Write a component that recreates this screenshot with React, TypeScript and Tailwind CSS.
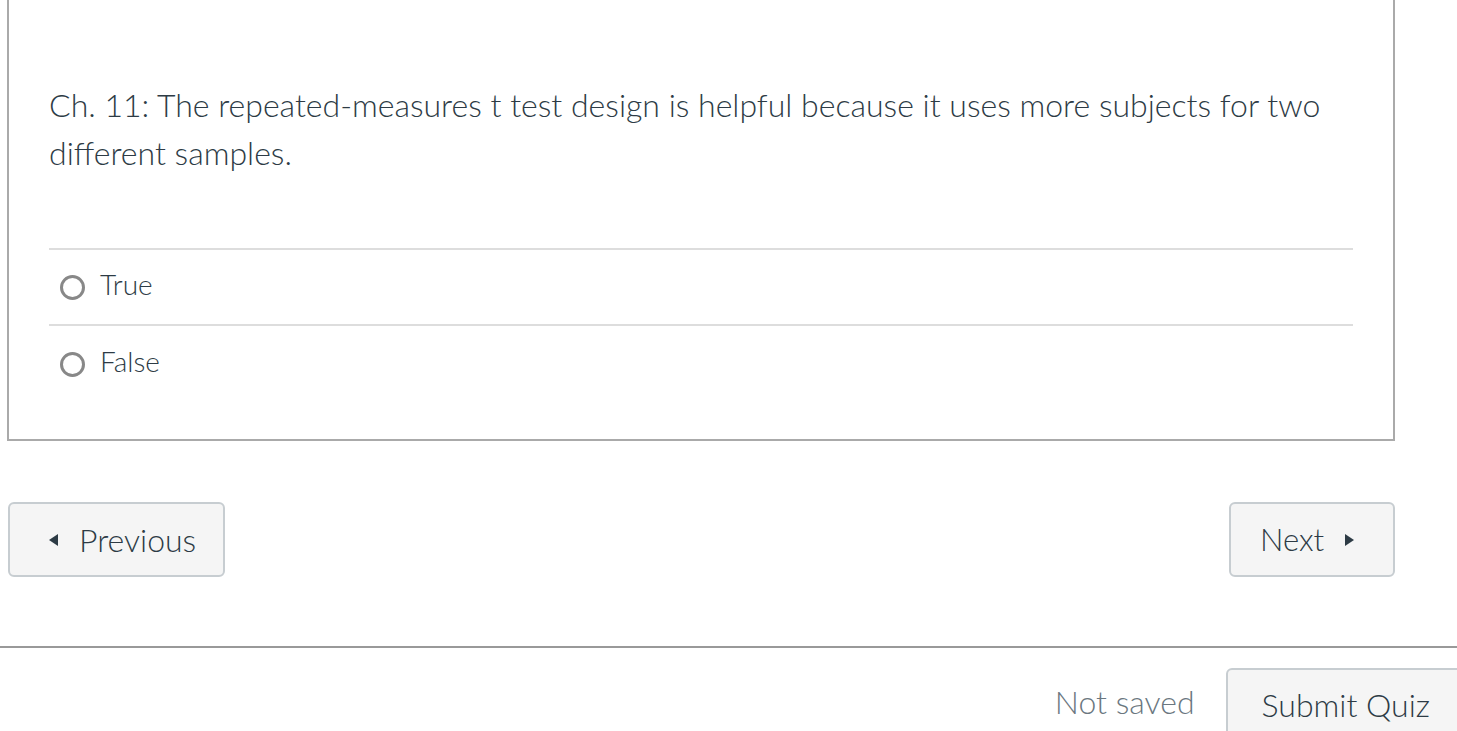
export default function App() {
  const answers = ["True", "False"];

  return (
    <div
      className="w-full h-[731px] overflow-hidden bg-white text-[#2d3b45]"
      style={{ fontFamily: "Lato, 'Noto Sans', sans-serif" }}
    >
      {/* question card (scrolled, top edge is above the viewport) */}
      <div className="ml-[7px] w-[1388px] border-x-2 border-b-2 border-[#aaaaaa] px-[40px] pt-[81px] pb-[37px]">
        <p className="text-[32px] leading-[48px] font-light">
          Ch. 11: The repeated-measures t test design is helpful because it uses more subjects for two
          different samples.
        </p>
        <div className="mt-[71px] border-t-2 border-[#dddddd]">
          {answers.map((a, i) => (
            <label
              key={a}
              className={
                "flex items-center h-[76px] pl-[11px] " +
                (i < answers.length - 1 ? "border-b-2 border-[#dddddd]" : "")
              }
            >
              <span className="w-[25px] h-[25px] rounded-full border-[3px] border-[#888888]" />
              <span className="ml-[15px] mb-[6px] text-[28px] font-light">{a}</span>
            </label>
          ))}
        </div>
      </div>

      {/* prev / next */}
      <div className="flex justify-between ml-[8px] w-[1387px] mt-[61px]">
        <button className="flex items-center h-[75px] w-[217px] rounded-[6px] border-2 border-[#c7cdd1] bg-[#f5f5f5] pl-[38px]">
          <svg width="12" height="14" viewBox="0 0 12 14" className="mr-[19px]">
            <path d="M10 1 L1 7 L10 13 Z" fill="#2d3b45" />
          </svg>
          <span className="text-[32px] font-light">Previous</span>
        </button>
        <button className="flex items-center h-[75px] w-[166px] rounded-[6px] border-2 border-[#c7cdd1] bg-[#f5f5f5] pl-[29px]">
          <span className="text-[31px] font-light">Next</span>
          <svg width="12" height="14" viewBox="0 0 12 14" className="ml-[19px]">
            <path d="M2 1 L11 7 L2 13 Z" fill="#2d3b45" />
          </svg>
        </button>
      </div>

      {/* footer */}
      <div className="mt-[69px] border-t-2 border-[#999999]">
        <div className="flex items-start justify-end -mr-[9px] pt-[20px]">
          <span className="text-[32px] leading-[40px] font-light text-[#6b7780] mr-[31px] mt-[14px]">
            Not saved
          </span>
          <button className="h-[80px] rounded-tl-[6px] border-2 border-[#c7cdd1] bg-[#f5f5f5] px-[34px] pt-[15px] flex items-start">
            <span className="text-[32px] font-light leading-[40px]">Submit Quiz</span>
          </button>
        </div>
      </div>
    </div>
  );
}
